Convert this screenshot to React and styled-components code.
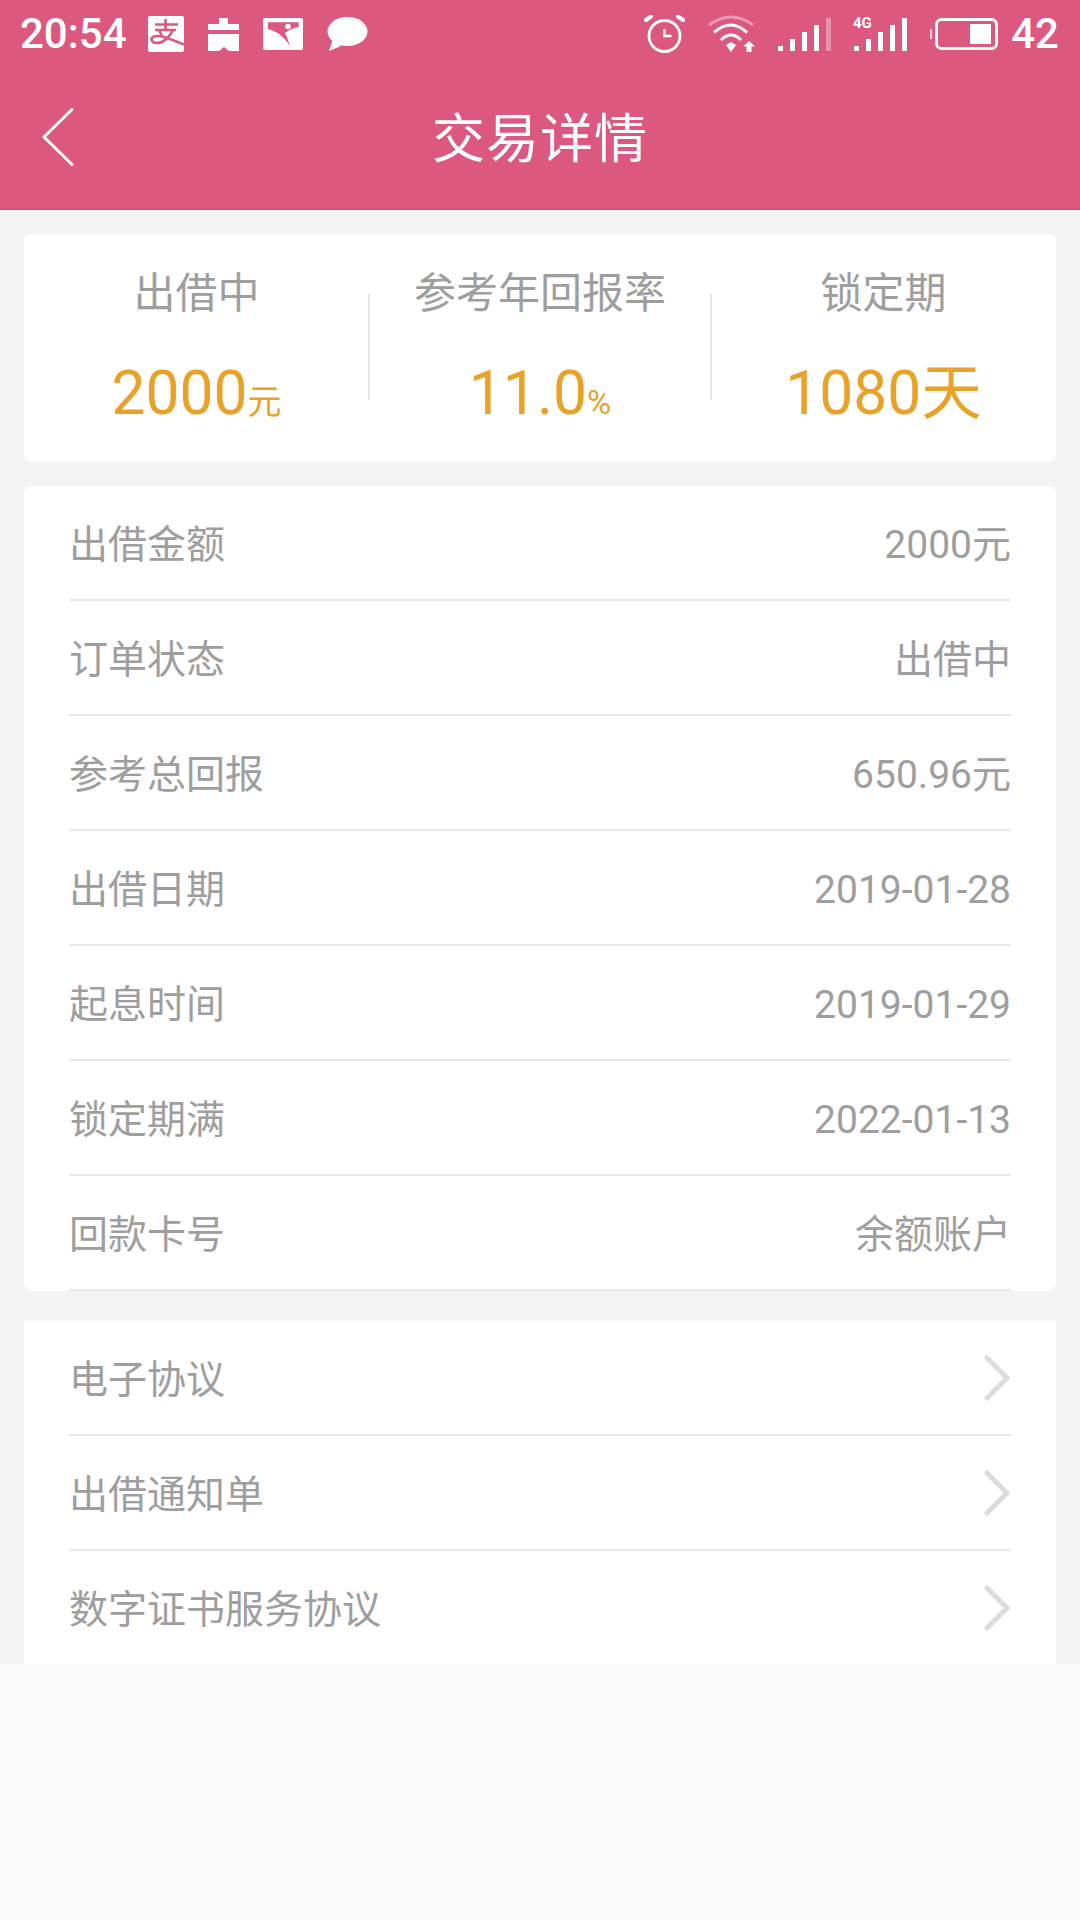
import React from "react";
import styled, { createGlobalStyle } from "styled-components";

const PINK = "#dc587e";

const Global = createGlobalStyle`
  html, body { margin: 0; padding: 0; background: #fafafa; }
  body { font-family: Roboto, "Noto Sans CJK SC", sans-serif; }
`;
const Page = styled.div`width: 1080px; height: 1920px; display: flex; flex-direction: column;`;
const Header = styled.header`background: ${PINK}; height: 210px; border-bottom: 1px solid #c94a70; box-sizing: border-box; color: #fff; flex: none;`;
const StatusBar = styled.div`height: 68px; display: flex; align-items: center; padding: 0 21px 0 20px;`;
const StatusText = styled.span`font-size: 42px; font-weight: 500; line-height: 1; margin-left: ${p => p.$left || 0}px;`;
const StatusGroup = styled.div`display: flex; align-items: center; gap: ${p => p.$gap}px; margin-left: ${p => p.$left};`;
const NavBar = styled.div`height: 141px; padding-top: 4px; box-sizing: border-box; display: flex; align-items: center; position: relative; justify-content: center;`;
const BackIcon = styled.svg`position: absolute; left: 41px; top: 38px;`;
const Title = styled.h1`margin: 0; font-size: 53px; font-weight: 400; line-height: 1; letter-spacing: 1px;`;
const Main = styled.main`background: #f4f4f4; padding: 24px 24px 0; display: flex; flex-direction: column; flex: none; height: 1454px; box-sizing: border-box;`;
const SummaryCard = styled.section`background: #fff; border-radius: 8px; height: 228px; display: grid; grid-template-columns: 345px 342px 345px;`;
const SummaryCol = styled.div`display: flex; flex-direction: column; align-items: center; position: relative; padding-top: 35px; box-sizing: border-box;
  & + &::before { content: ""; position: absolute; left: -1px; top: 60px; height: 106px; width: 2px; background: #e6e6e6; }`;
const SummaryLabel = styled.div`font-size: 42px; color: #9e9e9e; line-height: 50px;`;
const SummaryValue = styled.div`font-size: 60.5px; color: #e9a128; line-height: 70px; margin-top: 40px; white-space: nowrap;`;
const Unit = styled.span`font-size: ${p => p.$size}px;`;
const ListCard = styled.section`background: #fff; border-radius: ${p => p.$radius}; margin-top: ${p => p.$top}px; padding: 0 45px;`;
const Row = styled.div`height: 115px; box-sizing: border-box; padding-top: 4px; display: flex; align-items: center; justify-content: space-between; border-bottom: 2px solid #e8e8e8; color: #9e9e9e; font-size: 39px; line-height: 46px;
  &:last-child { border-bottom: ${p => p.$plain ? "none" : "2px solid #e8e8e8"}; height: ${p => p.$plain ? "113px" : "115px"}; }`;
const RowLabel = styled.span``;
const RowValue = styled.span``;
const Chevron = styled.svg`margin: -4px 1px 0 0;`;

const Alipay = () => (
  <svg width="36" height="36" viewBox="0 0 36 36">
    <rect width="36" height="36" rx="2" fill="#fff" />
    <path d="M7 8.500H30M17.500 3V14M7 14H28M25 14C22 21 15 27 9 27C3 27 2 22 6 20.500C13 18 26 25 36 28.500M11 14L14 20" fill="none" stroke={PINK} strokeWidth="2.600" />
  </svg>
);
const Tag = () => (
  <svg width="31" height="33" viewBox="0 0 31 33" fill="#fff">
    <path d="M11 0h9v6h11v6H0V6h11zM0 16h31v17H21l-5-4-5 4H0z" />
  </svg>
);
const Picture = () => (
  <svg width="40" height="32" viewBox="0 0 40 32">
    <rect width="40" height="32" rx="2" fill="#fff" />
    <path d="M5 4.300H35.700V9C30 10 26 12 22 15C24 20 26 24 27 28.300C23 21 16 14 5 11z" fill={PINK} />
    <circle cx="25" cy="8.500" r="2.800" fill="#fff" />
  </svg>
);
const Bubble = () => (
  <svg width="41" height="35" viewBox="0 0 41 35" fill="#fff">
    <ellipse cx="20.500" cy="14.500" rx="20" ry="14.500" />
    <path d="M6 22L2 34L14 29z" />
  </svg>
);
const Alarm = () => (
  <svg width="42" height="38" viewBox="0 0 42 38" fill="none" stroke="#fff">
    <circle cx="20.500" cy="21" r="15.500" strokeWidth="2.800" />
    <path d="M20.500 14v7h7" strokeWidth="2.400" />
    <path d="M2 5l5-3.500M39 5l-5-3.500" strokeWidth="4" strokeLinecap="round" />
  </svg>
);
const Wifi = () => (
  <svg width="48" height="38" viewBox="0 0 48 38" fill="none">
    <path d="M1 10Q23 -6 45 10" stroke="#fff" strokeOpacity=".4" strokeWidth="2.800" />
    <path d="M6 17.500Q23 2.500 39 17.500" stroke="#fff" strokeWidth="2.800" />
    <path d="M13 25Q23 15 33 25" stroke="#fff" strokeWidth="2.800" />
    <path d="M18 30L23 27L28 30L23 37z" fill="#fff" />
    <path d="M41 26L47 31.500H43.500V37H38.500V31.500H35z" fill="#fff" />
  </svg>
);
const bars = [5, 12, 19, 26, 33];
const Signal = () => (
  <svg width="53" height="34" viewBox="0 0 53 34" fill="#fff">
    {bars.map((h, i) => <rect key={i} x={i * 12} y={34 - h} width="5" height={h} opacity={i === 4 ? 0.35 : 1} />)}
  </svg>
);
const Signal4G = () => (
  <svg width="55" height="46" viewBox="0 -6 55 46" fill="#fff">
    {bars.map((h, i) => <rect key={i} x={i * 12 + 1} y={34 - h} width="5" height={h} />)}
    <text x="0" y="11" fontSize="15" fontWeight="700" fontFamily="Roboto, sans-serif">4G</text>
  </svg>
);
const Battery = () => (
  <svg width="68" height="33" viewBox="0 0 68 33">
    <rect x="0" y="11" width="2" height="10" fill="#fff" opacity=".7" />
    <rect x="6.500" y="1.500" width="60" height="29" rx="5" fill="none" stroke="#fff" strokeWidth="3" />
    <rect x="40" y="6" width="21" height="20" fill="#fff" />
  </svg>
);

const stats = [
  { label: "出借中", value: "2000", unit: "元", size: 34 },
  { label: "参考年回报率", value: "11.0", unit: "%", size: 33 },
  { label: "锁定期", value: "1080", unit: "天", size: 60.5 },
];
const details = [
  ["出借金额", "2000元"], ["订单状态", "出借中"], ["参考总回报", "650.96元"], ["出借日期", "2019-01-28"],
  ["起息时间", "2019-01-29"], ["锁定期满", "2022-01-13"], ["回款卡号", "余额账户"],
];
const links = ["电子协议", "出借通知单", "数字证书服务协议"];

export default function App() {
  return (
    <Page>
      <Global />
      <Header>
        <StatusBar>
          <StatusText>20:54</StatusText>
          <StatusGroup $gap={24} $left="21px"><Alipay /><Tag /><Picture /><Bubble /></StatusGroup>
          <StatusGroup $gap={22} $left="auto">
            <Alarm /><Wifi /><Signal /><Signal4G /><Battery />
          </StatusGroup>
          <StatusText $left={13}>42</StatusText>
        </StatusBar>
        <NavBar>
          <BackIcon width="34" height="62" viewBox="0 0 34 62" fill="none">
            <path d="M31 3.500L3 31L31 58.500" stroke="#fff" strokeWidth="3" strokeLinecap="round" strokeLinejoin="round" />
          </BackIcon>
          <Title>交易详情</Title>
        </NavBar>
      </Header>
      <Main>
        <SummaryCard>
          {stats.map(s => (
            <SummaryCol key={s.label}>
              <SummaryLabel>{s.label}</SummaryLabel>
              <SummaryValue>{s.value}<Unit $size={s.size}>{s.unit}</Unit></SummaryValue>
            </SummaryCol>
          ))}
        </SummaryCard>
        <ListCard $top={24} $radius="8px">
          {details.map(([k, v]) => (
            <Row key={k}><RowLabel>{k}</RowLabel><RowValue>{v}</RowValue></Row>
          ))}
        </ListCard>
        <ListCard $top={30} $radius="0">
          {links.map(k => (
            <Row key={k} $plain>
              <RowLabel>{k}</RowLabel>
              <Chevron width="26" height="46" viewBox="0 0 26 46" fill="none">
                <path d="M3 3L23 23L3 43" stroke="#dcdcdc" strokeWidth="5" strokeLinecap="round" strokeLinejoin="round" />
              </Chevron>
            </Row>
          ))}
        </ListCard>
      </Main>
    </Page>
  );
}
